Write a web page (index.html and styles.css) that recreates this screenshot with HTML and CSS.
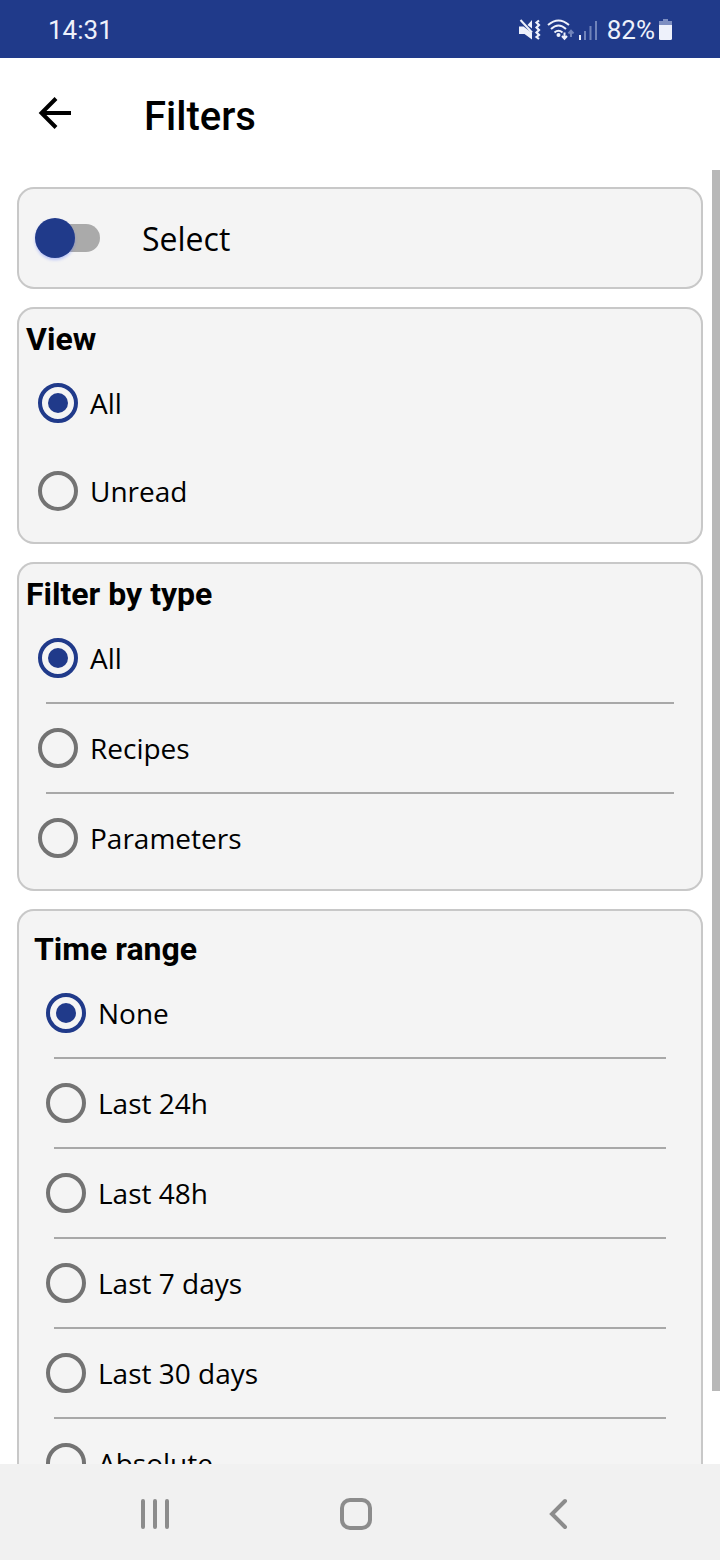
FILE: index.html
```html
<!DOCTYPE html>
<html lang="en">
<head>
<meta charset="utf-8">
<meta name="viewport" content="width=device-width, initial-scale=1">
<title>Filters</title>
<link rel="stylesheet" href="styles.css">
</head>
<body class="screen">
  <div class="status">
    <time class="status-time">14:31</time>
    <div class="status-icons">
      <svg class="icon-mute" width="22" height="22" viewBox="0 0 22 22" aria-hidden="true">
        <path d="M0 7.500h4.500L13 14v6.500L5.500 15H0zM8.500 6L13 1v8.500z" fill="#eef1fb"/>
        <path d="M1.500 1L13 13.500" stroke="#eef1fb" stroke-width="2"/>
        <path d="M20 1.500l-2.500 2 2.500 2.500-2.500 2.500 2.500 2.500-2.500 2.500 2.500 2.500-2.500 2 2.500 2" fill="none" stroke="#eef1fb" stroke-width="2.200"/>
      </svg>
      <svg class="icon-wifi" width="28" height="22" viewBox="0 0 28 22" aria-hidden="true">
        <g fill="none" stroke="#eef1fb" stroke-width="2">
          <path d="M1 6Q11.500-3 22 6"/>
          <path d="M4 10Q11.500 3 19 10"/>
          <path d="M7.500 13.500Q11.500 10 15.500 13.500"/>
        </g>
        <circle cx="11.500" cy="16" r="2" fill="#eef1fb"/>
        <path d="M17.500 13.500v6M15 17l2.500 2.800 2.500-2.800" fill="none" stroke="#eef1fb" stroke-width="2"/>
        <path d="M24 18v-6M21.500 14.500l2.500-2.800 2.500 2.800" fill="none" stroke="#7083ba" stroke-width="2"/>
      </svg>
      <svg class="icon-signal" width="20" height="22" viewBox="0 0 20 22" aria-hidden="true">
        <path d="M0 16h2v5H0z" fill="#eef1fb"/>
        <path d="M5 12h2v9H5zM10.500 7h2v14h-2zM16 2h2v19h-2z" fill="#7083ba"/>
      </svg>
      <span class="status-battery">82%</span>
      <svg class="icon-battery" width="13" height="22" viewBox="0 0 13 22" aria-hidden="true">
        <path d="M4 0h5v2h4v5H0V2h4z" fill="#7d8ec1"/>
        <path d="M0 6h13v13.500q0 1.500-1.500 1.500h-10Q0 21 0 19.500z" fill="#eef1fb"/>
      </svg>
    </div>
  </div>

  <header class="header">
    <button class="back" type="button" aria-label="Back">
      <svg width="34" height="34" viewBox="0 0 34 34" aria-hidden="true">
        <path d="M33 16H4M18 1.500L3.500 16 18 30.500" fill="none" stroke="#000" stroke-width="4"/>
      </svg>
    </button>
    <h1 class="title">Filters</h1>
  </header>

  <div class="body">
    <main class="content">
      <section class="card">
        <label class="toggle"><input class="switch" type="checkbox" role="switch">Select</label>
      </section>

      <fieldset class="card group">
        <legend class="heading">View</legend>
        <label class="option"><input class="radio" type="radio" name="view" checked>All</label>
        <label class="option"><input class="radio" type="radio" name="view">Unread</label>
      </fieldset>

      <fieldset class="card group divided">
        <legend class="heading">Filter by type</legend>
        <label class="option"><input class="radio" type="radio" name="type" checked>All</label>
        <label class="option"><input class="radio" type="radio" name="type">Recipes</label>
        <label class="option"><input class="radio" type="radio" name="type">Parameters</label>
      </fieldset>

      <fieldset class="card group divided roomy">
        <legend class="heading">Time range</legend>
        <label class="option"><input class="radio" type="radio" name="range" checked>None</label>
        <label class="option"><input class="radio" type="radio" name="range">Last 24h</label>
        <label class="option"><input class="radio" type="radio" name="range">Last 48h</label>
        <label class="option"><input class="radio" type="radio" name="range">Last 7 days</label>
        <label class="option"><input class="radio" type="radio" name="range">Last 30 days</label>
        <label class="option"><input class="radio" type="radio" name="range">Absolute</label>
      </fieldset>
    </main>
    <div class="scrollbar"></div>
  </div>

  <nav class="navbar" aria-label="System">
    <button class="nav-button" type="button" aria-label="Recent apps">
      <svg width="36" height="36" viewBox="0 0 36 36" aria-hidden="true">
        <path d="M6 5v26M18 5v26M30 5v26" stroke="#8c8c8c" stroke-width="4" stroke-linecap="round"/>
      </svg>
    </button>
    <button class="nav-button" type="button" aria-label="Home">
      <svg width="36" height="36" viewBox="0 0 36 36" aria-hidden="true">
        <rect x="4" y="4" width="28" height="28" rx="8" fill="none" stroke="#8c8c8c" stroke-width="4"/>
      </svg>
    </button>
    <button class="nav-button" type="button" aria-label="Back">
      <svg width="36" height="36" viewBox="0 0 36 36" aria-hidden="true">
        <path d="M25 5L12 18l13 13" fill="none" stroke="#8c8c8c" stroke-width="4" stroke-linecap="round"/>
      </svg>
    </button>
  </nav>
</body>
</html>
```

FILE: styles.css
```css
* {
  box-sizing: border-box;
}

.screen {
  display: flex;
  flex-direction: column;
  height: 100vh;
  margin: 0;
  background: #fff;
  color: #000;
  font-family: "Open Sans", "Noto Sans", sans-serif;
  font-size: 28px;
}

.status {
  display: flex;
  flex: none;
  align-items: center;
  justify-content: space-between;
  height: 58px;
  padding: 2px 48px 0;
  background: #203a8a;
  color: #eef1fb;
  font-family: Roboto, sans-serif;
  font-size: 26px;
}

.status-icons {
  display: flex;
  align-items: center;
  gap: 4px;
}

.icon-mute {
  margin-right: 2px;
}

.status-battery {
  margin-left: 4px;
}

.header {
  display: flex;
  flex: none;
  align-items: center;
  gap: 72px;
  height: 112px;
  padding: 0 38px;
}

.back,
.nav-button {
  display: flex;
  padding: 0;
  border: 0;
  background: none;
}

.title {
  margin: 4px 0 0;
  font-family: Roboto, sans-serif;
  font-size: 40px;
  font-weight: 500;
}

.body {
  position: relative;
  flex: 1;
  min-height: 0;
}

.content {
  display: flex;
  flex-direction: column;
  gap: 18px;
  height: 100%;
  padding: 17px;
  overflow-y: auto;
  scrollbar-width: none;
}

.scrollbar {
  position: absolute;
  top: 0;
  right: 0;
  bottom: 73px;
  width: 8px;
  background: #b8b8b8;
}

.card {
  flex: none;
  min-width: 0;
  margin: 0;
  padding: 7px;
  border: 2px solid #c8c8c8;
  border-radius: 17px;
  background: #f4f4f4;
}

.roomy {
  padding: 15px;
}

.toggle {
  display: flex;
  align-items: center;
  gap: 42px;
  height: 84px;
  padding-left: 9px;
  font-size: 32px;
}

.switch {
  display: flex;
  align-items: center;
  width: 65px;
  height: 28px;
  margin: 0;
  appearance: none;
  border-radius: 14px;
  background: linear-gradient(90deg, transparent 20px, #aaa 20px);
}

.switch::before {
  content: "";
  flex: none;
  width: 40px;
  height: 40px;
  border-radius: 50%;
  background: #203a8a;
  box-shadow: 0 2px 3px #4060ff50;
}

.switch:checked {
  justify-content: flex-end;
}

.heading {
  float: left;
  width: 100%;
  height: 43px;
  padding: 0;
  font-family: Roboto, sans-serif;
  font-size: 32px;
  font-weight: 700;
  line-height: 46px;
}

.option {
  display: flex;
  clear: both;
  align-items: center;
  gap: 12px;
  height: 88px;
  padding-left: 12px;
}

.divided .option + .option {
  flex-wrap: wrap;
  align-content: flex-start;
  row-gap: 24px;
  height: 90px;
}

.divided .option + .option::before {
  content: "";
  flex: 0 0 100%;
  height: 2px;
  background: linear-gradient(#a8a8a8, #a8a8a8) 8px 0 / calc(100% - 28px) 2px no-repeat;
}

.radio {
  display: grid;
  place-items: center;
  width: 40px;
  height: 40px;
  margin: 0;
  appearance: none;
  border: 4px solid #737373;
  border-radius: 50%;
}

.radio:checked {
  border-color: #203a8a;
}

.radio:checked::before {
  content: "";
  width: 20px;
  height: 20px;
  border-radius: 50%;
  background: #203a8a;
}

.navbar {
  display: flex;
  flex: none;
  align-items: center;
  justify-content: space-between;
  height: 96px;
  padding: 4px 20% 0 19%;
  background: #f1f1f1;
}
```
